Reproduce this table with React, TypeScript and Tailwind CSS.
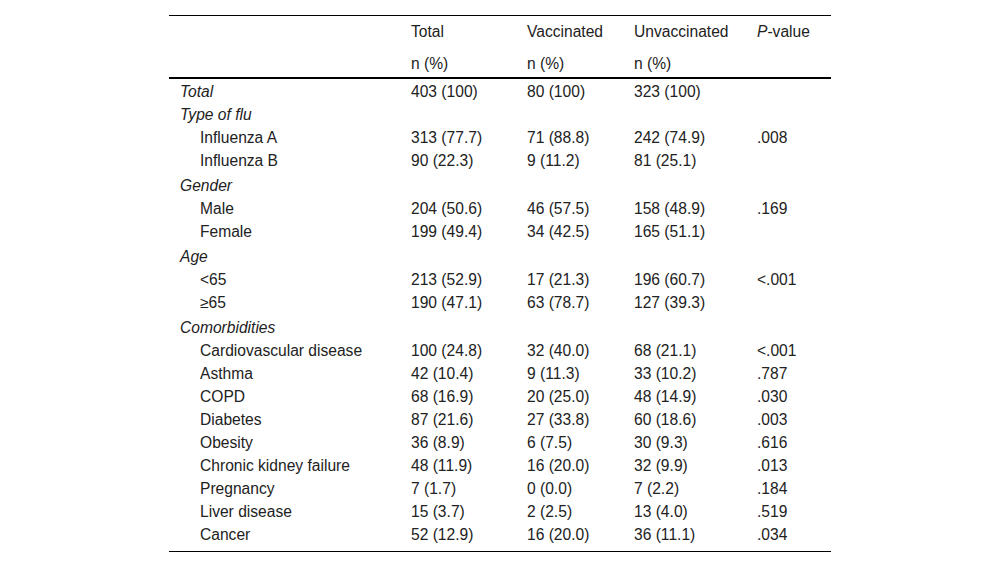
import React from "react";

type Row =
  | { kind: "group"; label: string; extra?: boolean; cells?: string[] }
  | { kind: "item"; label: string; cells: string[] };

const rows: Row[] = [
  { kind: "group", label: "Total", cells: ["403 (100)", "80 (100)", "323 (100)", ""] },
  { kind: "group", label: "Type of flu" },
  { kind: "item", label: "Influenza A", cells: ["313 (77.7)", "71 (88.8)", "242 (74.9)", ".008"] },
  { kind: "item", label: "Influenza B", cells: ["90 (22.3)", "9 (11.2)", "81 (25.1)", ""] },
  { kind: "group", label: "Gender", extra: true },
  { kind: "item", label: "Male", cells: ["204 (50.6)", "46 (57.5)", "158 (48.9)", ".169"] },
  { kind: "item", label: "Female", cells: ["199 (49.4)", "34 (42.5)", "165 (51.1)", ""] },
  { kind: "group", label: "Age", extra: true },
  { kind: "item", label: "<65", cells: ["213 (52.9)", "17 (21.3)", "196 (60.7)", "<.001"] },
  { kind: "item", label: "≥65", cells: ["190 (47.1)", "63 (78.7)", "127 (39.3)", ""] },
  { kind: "group", label: "Comorbidities", extra: true },
  { kind: "item", label: "Cardiovascular disease", cells: ["100 (24.8)", "32 (40.0)", "68 (21.1)", "<.001"] },
  { kind: "item", label: "Asthma", cells: ["42 (10.4)", "9 (11.3)", "33 (10.2)", ".787"] },
  { kind: "item", label: "COPD", cells: ["68 (16.9)", "20 (25.0)", "48 (14.9)", ".030"] },
  { kind: "item", label: "Diabetes", cells: ["87 (21.6)", "27 (33.8)", "60 (18.6)", ".003"] },
  { kind: "item", label: "Obesity", cells: ["36 (8.9)", "6 (7.5)", "30 (9.3)", ".616"] },
  { kind: "item", label: "Chronic kidney failure", cells: ["48 (11.9)", "16 (20.0)", "32 (9.9)", ".013"] },
  { kind: "item", label: "Pregnancy", cells: ["7 (1.7)", "0 (0.0)", "7 (2.2)", ".184"] },
  { kind: "item", label: "Liver disease", cells: ["15 (3.7)", "2 (2.5)", "13 (4.0)", ".519"] },
  { kind: "item", label: "Cancer", cells: ["52 (12.9)", "16 (20.0)", "36 (11.1)", ".034"] },
];

const grid = "grid grid-cols-[230px_116px_107px_123px_86px]";

export default function App() {
  return (
    <div
      className="min-h-[567px] w-full bg-white pt-[15px] text-[15.6px] text-[#222]"
      style={{ fontFamily: '"Liberation Sans", Arial, Helvetica, sans-serif' }}
    >
      <div className="mx-auto w-[662px] border-t border-b border-black">
        <div className={`${grid} h-[31px] items-center leading-[23px]`}>
          <div />
          <div className="pl-3">Total</div>
          <div className="pl-3">Vaccinated</div>
          <div className="pl-3">Unvaccinated</div>
          <div className="pl-3">
            <i>P</i>-value
          </div>
        </div>
        <div className={`${grid} h-[32px] items-center pt-[2px] leading-[23px] border-b-2 border-black`}>
          <div />
          <div className="pl-3">n (%)</div>
          <div className="pl-3">n (%)</div>
          <div className="pl-3">n (%)</div>
          <div />
        </div>
        <div className="pt-[1px] pb-[5px]">
          {rows.map((r, i) => (
            <div
              key={i}
              className={`${grid} leading-[23px] ${r.kind === "group" && r.extra ? "pt-[2px]" : ""}`}
            >
              {r.kind === "group" ? (
                <div className="pl-[11px] italic">{r.label}</div>
              ) : (
                <div className="pl-[31px]">{r.label}</div>
              )}
              {(r.cells ?? ["", "", "", ""]).map((c, j) => (
                <div key={j} className="pl-3 whitespace-nowrap">
                  {c}
                </div>
              ))}
            </div>
          ))}
        </div>
      </div>
    </div>
  );
}
